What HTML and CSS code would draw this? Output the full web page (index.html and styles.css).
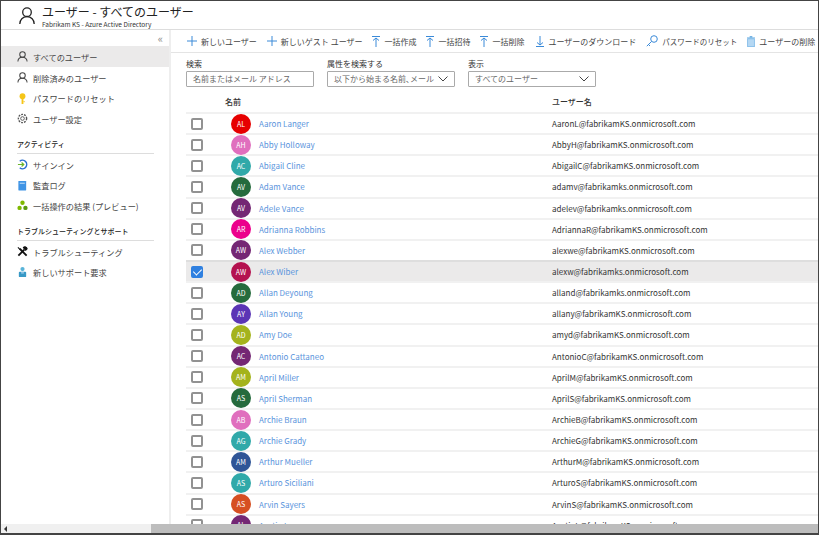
FILE: index.html
```html
<!DOCTYPE html>
<html lang="ja">
<head>
  <meta charset="UTF-8">
  <meta name="viewport" content="width=device-width, initial-scale=1.0">
  <title>ユーザー - すべてのユーザー</title>
  <link rel="stylesheet" href="styles.css">
</head>
<body>
  <div class="frame">
    <header class="top">
      <svg class="top-icon" width="16" height="17" viewBox="0 0 16 17" fill="none" stroke="#222" stroke-width="1.300"><circle cx="8" cy="5.200" r="4.300"/><path d="M.8 17c0-4.400 3-7.300 7.200-7.300s7.200 2.900 7.200 7.300"/></svg>
      <div>
        <div class="top-title">ユーザー - すべてのユーザー</div>
        <div class="top-sub">Fabrikam KS - Azure Active Directory</div>
      </div>
    </header>
    <div class="body">
      <aside class="side">
        <div class="collapse">«</div>
        <a class="nav active"><svg width="11" height="11" viewBox="0 0 12 12" fill="none" stroke="#444" stroke-width="1.100"><circle cx="6" cy="3.800" r="3"/><path d="M1 11.500c0-3 2.200-4.700 5-4.700s5 1.700 5 4.700"/></svg>すべてのユーザー</a>
        <a class="nav"><svg width="11" height="11" viewBox="0 0 12 12" fill="none" stroke="#444" stroke-width="1.100"><circle cx="6" cy="3.800" r="3"/><path d="M1 11.500c0-3 2.200-4.700 5-4.700s5 1.700 5 4.700"/></svg>削除済みのユーザー</a>
        <a class="nav"><svg width="11" height="11" viewBox="0 0 12 12"><circle cx="6" cy="3.500" r="3.200" fill="#f5c518"/><rect x="5" y="5" width="2" height="7" fill="#f5c518"/><rect x="7" y="9" width="1.500" height="1" fill="#f5c518"/></svg>パスワードのリセット</a>
        <a class="nav"><svg width="11" height="11" viewBox="0 0 12 12" fill="none" stroke="#555"><circle cx="6" cy="6" r="2"/><circle cx="6" cy="6" r="4.500" stroke-width="1.500" stroke-dasharray="2 1.200"/></svg>ユーザー設定</a>
        <div class="group">アクティビティ</div>
        <a class="nav"><svg width="11" height="11" viewBox="0 0 12 12" fill="none"><path d="M3 2.500a4.600 4.600 0 1 1 0 7" stroke="#2a6fd0" stroke-width="1.600"/><path d="M1 6h6M5 3.800L7.400 6 5 8.200" stroke="#6cb52d" stroke-width="1.300"/></svg>サインイン</a>
        <a class="nav"><svg width="11" height="11" viewBox="0 0 12 12"><rect x="1.500" y="1" width="8.500" height="10.500" rx=".5" fill="#3f94e5"/><rect x="3" y="3" width="5.500" height="1" fill="#cfe6fb"/></svg>監査ログ</a>
        <a class="nav"><svg width="11" height="11" viewBox="0 0 12 12" fill="#7fb900"><circle cx="6" cy="3" r="2.400"/><circle cx="2.800" cy="8.600" r="2.400"/><circle cx="9.200" cy="8.600" r="2.400" fill="#5a9a10"/></svg>一括操作の結果 (プレビュー)</a>
        <div class="group">トラブルシューティングとサポート</div>
        <a class="nav"><svg width="11" height="11" viewBox="0 0 12 12" stroke="#111" fill="none"><path d="M3 3l7.500 7.500" stroke-width="2"/><path d="M1.500 10.500L8 4" stroke-width="2"/><path d="M1 1.500L3.500 4M7 1.500c1.500-1.200 3.500-.6 4 1.500L9.500 4.500 7.800 3z" stroke-width="1.200" fill="#111"/></svg>トラブルシューティング</a>
        <a class="nav"><svg width="11" height="12" viewBox="0 0 12 12"><circle cx="6" cy="2.800" r="2.300" fill="#59b4d9"/><rect x="2" y="5.800" width="8" height="5.700" rx="1" fill="#3999c6"/><rect x="4.500" y="6.500" width="3" height="1" fill="#cfe6fb"/></svg>新しいサポート要求</a>
      </aside>
      <main class="main">
        <div class="toolbar">
          <span class="tool"><svg width="10" height="10" viewBox="0 0 10 10" stroke="#3b8ad8"><path d="M5 0v10M0 5h10"/></svg>新しいユーザー</span>
          <span class="tool"><svg width="10" height="10" viewBox="0 0 10 10" stroke="#3b8ad8"><path d="M5 0v10M0 5h10"/></svg>新しいゲスト ユーザー</span>
          <span class="tool"><svg width="8" height="11" viewBox="0 0 8 11" fill="none" stroke="#3b8ad8"><path d="M0 .5h8M4 11V2M1 4.500L4 2l3 2.500"/></svg>一括作成</span>
          <span class="tool"><svg width="8" height="11" viewBox="0 0 8 11" fill="none" stroke="#3b8ad8"><path d="M0 .5h8M4 11V2M1 4.500L4 2l3 2.500"/></svg>一括招待</span>
          <span class="tool"><svg width="8" height="11" viewBox="0 0 8 11" fill="none" stroke="#3b8ad8"><path d="M0 .5h8M4 11V2M1 4.500L4 2l3 2.500"/></svg>一括削除</span>
          <span class="tool tool-download"><svg width="8" height="11" viewBox="0 0 8 11" fill="none" stroke="#3b8ad8"><path d="M0 10.500h8M4 0v9M1 6.500L4 9l3-2.500"/></svg>ユーザーのダウンロード</span>
          <span class="tool tool-reset"><svg width="12" height="12" viewBox="0 0 12 12" fill="none" stroke="#3b8ad8"><circle cx="8" cy="4" r="3.300"/><path d="M5.500 6.500L.8 11.200M2.500 9.500l1.500 1.500"/></svg>パスワードのリセット</span>
          <span class="tool"><svg width="8" height="11" viewBox="0 0 9 12"><rect x="3" y="0" width="3" height="1.500" fill="#59a5e0"/><rect x="0" y="1.500" width="9" height="1" fill="#59a5e0"/><rect x=".8" y="3" width="7.400" height="9" fill="#b5d8f3" stroke="#59a5e0" stroke-width=".7"/></svg>ユーザーの削除</span>
        </div>
        <div class="filters">
          <label class="filter">
            <span>検索</span>
            <span class="input">名前またはメール アドレス</span>
          </label>
          <label class="filter">
            <span>属性を検索する</span>
            <span class="input select">以下から始まる名前､メール<svg width="10" height="6" viewBox="0 0 10 6" fill="none" stroke="#444"><path d="M.5.500L5 5 9.500.500"/></svg></span>
          </label>
          <label class="filter">
            <span>表示</span>
            <span class="input select">すべてのユーザー<svg width="10" height="6" viewBox="0 0 10 6" fill="none" stroke="#444"><path d="M.5.500L5 5 9.500.500"/></svg></span>
          </label>
        </div>
        <div class="head"><span class="col-name">名前</span><span>ユーザー名</span></div>
        <div class="rows" id="rows"></div>
      </main>
    </div>
    <div class="hscroll"><span class="arrow"></span><span class="thumb"></span></div>
  </div>
  <script>
    const users = [
      ['AL', '#e60000', 'Aaron Langer', 'AaronL@fabrikamKS.onmicrosoft.com'],
      ['AH', '#e06fbe', 'Abby Holloway', 'AbbyH@fabrikamKS.onmicrosoft.com'],
      ['AC', '#30a9a9', 'Abigail Cline', 'AbigailC@fabrikamKS.onmicrosoft.com'],
      ['AV', '#256b3d', 'Adam Vance', 'adamv@fabrikamks.onmicrosoft.com'],
      ['AV', '#742774', 'Adele Vance', 'adelev@fabrikamks.onmicrosoft.com'],
      ['AR', '#ec008c', 'Adrianna Robbins', 'AdriannaR@fabrikamKS.onmicrosoft.com'],
      ['AW', '#742774', 'Alex Webber', 'alexwe@fabrikamKS.onmicrosoft.com'],
      ['AW', '#b4124f', 'Alex Wiber', 'alexw@fabrikamks.onmicrosoft.com'],
      ['AD', '#256b3d', 'Allan Deyoung', 'alland@fabrikamks.onmicrosoft.com'],
      ['AY', '#5b35b5', 'Allan Young', 'allany@fabrikamKS.onmicrosoft.com'],
      ['AD', '#a4b31c', 'Amy Doe', 'amyd@fabrikamKS.onmicrosoft.com'],
      ['AC', '#742774', 'Antonio Cattaneo', 'AntonioC@fabrikamKS.onmicrosoft.com'],
      ['AM', '#a4b31c', 'April Miller', 'AprilM@fabrikamKS.onmicrosoft.com'],
      ['AS', '#256b3d', 'April Sherman', 'AprilS@fabrikamKS.onmicrosoft.com'],
      ['AB', '#e06fbe', 'Archie Braun', 'ArchieB@fabrikamKS.onmicrosoft.com'],
      ['AG', '#30a9a9', 'Archie Grady', 'ArchieG@fabrikamKS.onmicrosoft.com'],
      ['AM', '#2f5597', 'Arthur Mueller', 'ArthurM@fabrikamKS.onmicrosoft.com'],
      ['AS', '#30a9a9', 'Arturo Siciliani', 'ArturoS@fabrikamKS.onmicrosoft.com'],
      ['AS', '#d64f22', 'Arvin Sayers', 'ArvinS@fabrikamKS.onmicrosoft.com'],
      ['AL', '#742774', 'Austin Larson', 'AustinL@fabrikamKS.onmicrosoft.com']
    ];
    const rows = document.querySelector('#rows');
    users.forEach((u, i) => {
      const row = document.createElement('div');
      row.className = i === 7 ? 'row selected' : 'row';
      row.innerHTML = `<span class="check"></span>
        <span class="avatar" style="background:${u[1]}">${u[0]}</span>
        <a class="name">${u[2]}</a>
        <span class="mail">${u[3]}</span>`;
      rows.appendChild(row);
    });
  </script>
</body>
</html>
```

FILE: styles.css
```css
* {
  box-sizing: border-box;
}

html,
body {
  margin: 0;
  height: 100%;
}

body {
  font-family: "Noto Sans CJK JP", "Noto Sans", sans-serif;
  font-size: 8px;
  color: #333;
  background: #fff;
  overflow: hidden;
}

.frame {
  width: 819px;
  height: 535px;
  border: 1px solid #444;
  border-bottom-width: 2px;
  display: flex;
  flex-direction: column;
  overflow: hidden;
}

.top {
  height: 29px;
  flex: none;
  display: flex;
  align-items: flex-start;
  gap: 7px;
  padding: 4px 0 0 18px;
  border-bottom: 1px solid #ddd;
}

.top-icon {
  margin-top: 2px;
}

.top-title {
  font-size: 12px;
  line-height: 14px;
  color: #222;
}

.top-sub {
  margin-top: 1px;
  font-size: 6.5px;
  line-height: 8px;
  color: #333;
}

.body {
  flex: 1;
  display: flex;
  min-height: 0;
}

.side {
  width: 170px;
  flex: none;
  border-right: 2px solid #eee;
}

.collapse {
  height: 16px;
  padding: 1px 6px 0 0;
  text-align: right;
  font-size: 11px;
  line-height: 14px;
  color: #8a8a8a;
}

.nav {
  height: 20.7px;
  display: flex;
  align-items: center;
  gap: 5px;
  padding: 1px 0 0 16px;
  font-size: 8.200px;
  color: #444;
}

.nav svg {
  flex: none;
}

.nav.active {
  background: #ebeaea;
}

.group {
  margin: 9px 15px 0 16px;
  padding-bottom: 3px;
  border-bottom: 1px solid #ddd;
  line-height: 12px;
  font-size: 7px;
  font-weight: 500;
  color: #222;
}

.main {
  flex: 1;
  min-width: 0;
  overflow: hidden;
}

.toolbar {
  height: 23px;
  display: flex;
  align-items: center;
  gap: 10px;
  padding-left: 16px;
  border-bottom: 1px solid #e4e4e4;
  white-space: nowrap;
}

.tool {
  display: flex;
  align-items: center;
  gap: 4px;
  color: #444;
}

.tool-download {
  margin-left: 2px;
}

.tool-reset {
  font-size: 7.500px;
}

.filters {
  display: flex;
  gap: 13px;
  padding: 5px 0 0 15px;
}

.filter {
  width: 128px;
  display: flex;
  flex-direction: column;
  line-height: 12px;
  color: #333;
}

.input {
  height: 16px;
  margin-top: 1px;
  padding: 0 6px;
  display: flex;
  align-items: center;
  justify-content: space-between;
  border: 1px solid #aaa;
  border-radius: 1px;
  color: #666;
  white-space: nowrap;
}

.head {
  height: 25px;
  display: flex;
  align-items: center;
  margin-left: 15px;
  padding-top: 3px;
  font-weight: 500;
  color: #333;
}

.col-name {
  width: 366px;
  padding-left: 39px;
}

.row {
  height: 21.15px;
  display: flex;
  align-items: center;
  margin-left: 15px;
  border-top: 2px solid #f1f1f1;
  white-space: nowrap;
}

.row.selected {
  background: #ebeaea;
  border-top-color: #dedede;
}

.check {
  width: 12px;
  height: 12px;
  flex: none;
  margin-left: 5px;
  border: 2px solid #929292;
  border-radius: 2px;
  background: #fff;
}

.selected .check {
  background: #2f80e0;
  border-color: #2f80e0;
  position: relative;
}

.selected .check::after {
  content: "";
  position: absolute;
  left: 2px;
  top: -1px;
  width: 4px;
  height: 7px;
  border: solid #fff;
  border-width: 0 1px 1px 0;
  transform: rotate(45deg);
}

.avatar {
  width: 20px;
  height: 20px;
  flex: none;
  margin-left: 28px;
  border-radius: 50%;
  display: flex;
  align-items: center;
  justify-content: center;
  font-size: 7px;
  color: #fff;
}

.name {
  width: 301px;
  flex: none;
  padding-left: 8px;
  color: #5a94dc;
}

.mail {
  color: #333;
}

.hscroll {
  height: 9px;
  flex: none;
  display: flex;
  align-items: center;
  background: #f0f0f0;
}

.arrow {
  width: 0;
  height: 0;
  margin-left: 3px;
  border: 3px solid transparent;
  border-left: 0;
  border-right-color: #333;
}

.thumb {
  height: 100%;
  flex: 1;
  margin-left: 144px;
  background: #bdbdbd;
}
```
